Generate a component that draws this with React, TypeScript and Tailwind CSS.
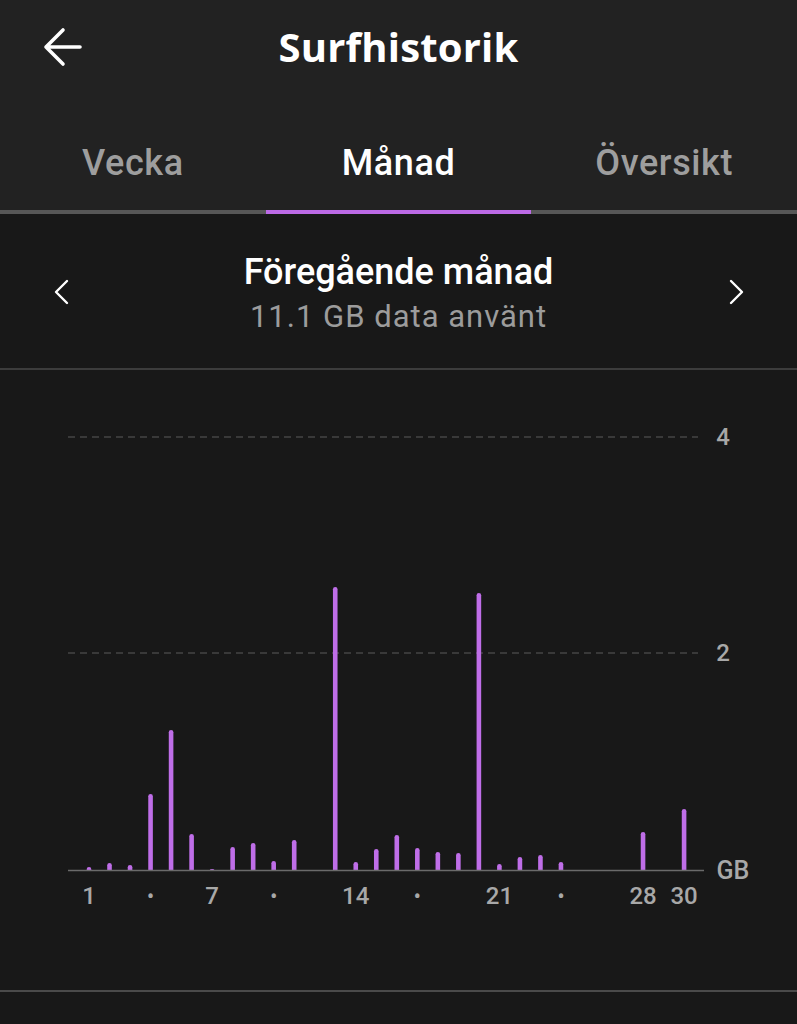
import React from "react";

const bars: number[] = [3, 7, 5, 76, 140, 36, 1, 23, 27, 9, 30, 0, 283, 8, 21, 35, 22, 18, 17, 277, 6, 13, 15, 8, 0, 0, 0, 38, 0, 61];

const labels: { day: number; text: string }[] = [
  { day: 1, text: "1" },
  { day: 4, text: "•" },
  { day: 7, text: "7" },
  { day: 10, text: "•" },
  { day: 14, text: "14" },
  { day: 17, text: "•" },
  { day: 21, text: "21" },
  { day: 24, text: "•" },
  { day: 28, text: "28" },
  { day: 30, text: "30" },
];

const xOf = (day: number) => 89 + (day - 1) * 20.52;

function Chart() {
  const base = 500;
  return (
    <svg width="797" height="620" viewBox="0 0 797 620" className="block" style={{ fontFamily: "Roboto, 'Liberation Sans', sans-serif" }}>
      <line x1="68" y1="67" x2="698" y2="67" stroke="#5a5a5a" strokeWidth="1.2" strokeDasharray="7 5" />
      <line x1="68" y1="283" x2="698" y2="283" stroke="#5a5a5a" strokeWidth="1.2" strokeDasharray="7 5" />
      <text x="723" y="67" fill="#a8a8a8" fontSize="24" fontWeight="500" textAnchor="middle" dominantBaseline="central">4</text>
      <text x="723" y="283" fill="#a8a8a8" fontSize="24" fontWeight="500" textAnchor="middle" dominantBaseline="central">2</text>
      <text x="733" y="500" fill="#a8a8a8" fontSize="25" fontWeight="500" textAnchor="middle" dominantBaseline="central">GB</text>
      {bars.map((h, i) => {
        if (h <= 0) return null;
        const x = xOf(i + 1);
        const w = 4.6;
        const r = Math.min(2.3, h);
        const top = base - h;
        const d = `M ${x - w / 2} ${base} L ${x - w / 2} ${top + r} Q ${x - w / 2} ${top} ${x} ${top} Q ${x + w / 2} ${top} ${x + w / 2} ${top + r} L ${x + w / 2} ${base} Z`;
        return <path key={i} d={d} fill="#bf6ee8" />;
      })}
      <line x1="68" y1="500.5" x2="704" y2="500.5" stroke="#6a6a6a" strokeWidth="1.5" />
      {labels.map((l) => (
        <text
          key={l.day}
          x={xOf(l.day)}
          y="526"
          fill="#a8a8a8"
          fontSize={l.text === "•" ? 20 : 24}
          fontWeight="500"
          textAnchor="middle"
          dominantBaseline="central"
        >
          {l.text}
        </text>
      ))}
    </svg>
  );
}

export default function App() {
  return (
    <div className="w-[797px] h-[1024px] overflow-hidden bg-[#181818]" style={{ fontFamily: "Roboto, 'Liberation Sans', sans-serif" }}>
      <div className="bg-[#222222]">
        <div className="relative h-[94px] flex items-center justify-center">
          <svg className="absolute left-[40px] top-[25px]" width="46" height="44" viewBox="0 0 46 44">
            <path d="M6 22 H40 M23 5 L6 22 L23 39" stroke="#ffffff" strokeWidth="3.6" fill="none" strokeLinecap="round" strokeLinejoin="round" />
          </svg>
          <div className="text-white text-[40px] font-bold leading-none tracking-[0.2px]" style={{ fontFamily: "'Open Sans', Roboto, sans-serif" }}>Surfhistorik</div>
        </div>
        <div className="flex h-[120px]">
          <div className="flex-1 flex items-center justify-center pt-[22px] border-b-[4px] border-[#575757] text-[36px] font-medium text-[#9e9e9e] tracking-[0.6px]">Vecka</div>
          <div className="flex-1 flex items-center justify-center pt-[22px] border-b-[4px] border-[#bc6ae6] text-[36px] font-medium text-white tracking-[0.6px]">Månad</div>
          <div className="flex-1 flex items-center justify-center pt-[22px] border-b-[4px] border-[#575757] text-[36px] font-medium text-[#9e9e9e] tracking-[0.6px]">Översikt</div>
        </div>
      </div>
      <div className="relative h-[156px] flex flex-col items-center border-b-2 border-[#3c3c3c]">
        <svg className="absolute left-[52px] top-[64px]" width="20" height="28" viewBox="0 0 20 28">
          <path d="M15 3 L4 14 L15 25" stroke="#ffffff" strokeWidth="2.4" fill="none" strokeLinecap="round" strokeLinejoin="round" />
        </svg>
        <svg className="absolute left-[726px] top-[64px]" width="20" height="28" viewBox="0 0 20 28">
          <path d="M5 3 L16 14 L5 25" stroke="#ffffff" strokeWidth="2.4" fill="none" strokeLinecap="round" strokeLinejoin="round" />
        </svg>
        <div className="mt-[37px] text-white text-[36px] font-medium leading-[42px]">Föregående månad</div>
        <div className="mt-[5px] text-[#9c9c9c] text-[31px] leading-[38px] tracking-[1px]">11.1 GB data använt</div>
      </div>
      <div className="border-b-2 border-[#4a4a4a]">
        <Chart />
      </div>
    </div>
  );
}
